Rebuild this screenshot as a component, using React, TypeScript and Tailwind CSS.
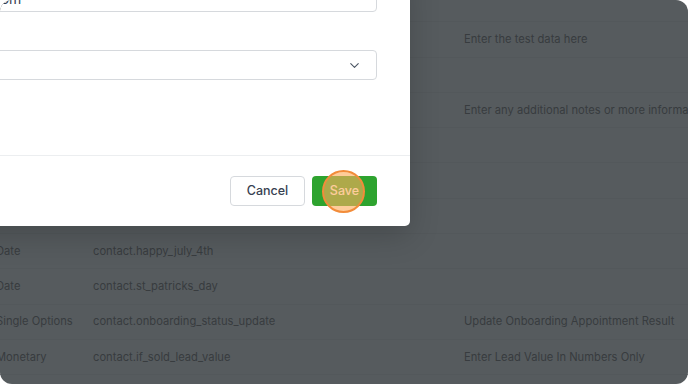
import { ChevronDown } from "lucide-react";

const rows = [
  { type: "", key: "", hint: "" },
  { type: "Text", key: "contact.test_data", hint: "Enter the test data here" },
  { type: "", key: "", hint: "" },
  { type: "Large Text", key: "contact.additional_notes", hint: "Enter any additional notes or more information" },
  { type: "", key: "", hint: "" },
  { type: "", key: "", hint: "" },
  { type: "", key: "", hint: "" },
  { type: "Date", key: "contact.happy_july_4th", hint: "" },
  { type: "Date", key: "contact.st_patricks_day", hint: "" },
  { type: "Single Options", key: "contact.onboarding_status_update", hint: "Update Onboarding Appointment Result" },
  { type: "Monetary", key: "contact.if_sold_lead_value", hint: "Enter Lead Value In Numbers Only" },
  { type: "", key: "", hint: "" },
];

export default function App() {
  return (
    <div
      className="h-[384px] w-[688px] overflow-hidden bg-white"
      style={{ fontFamily: "Inter, 'Noto Sans', sans-serif" }}
    >
      <div className="relative h-full w-full overflow-hidden rounded-[12px] bg-[#565b5e]">
        {/* Dimmed table behind the modal */}
        <div className="-mt-[13px] flex flex-col">
          {rows.map((r, i) => (
            <div
              key={i}
              className="flex h-[35.3px] shrink-0 items-center border-b border-[#53585b] text-[11.2px] text-[#383c3f]"
            >
              <div className="-ml-[4px] w-[97px] shrink-0 whitespace-nowrap">{r.type}</div>
              <div className="w-[371px] shrink-0 whitespace-nowrap">{r.key}</div>
              <div className="whitespace-nowrap">{r.hint}</div>
            </div>
          ))}
        </div>

        {/* Modal */}
        <div className="absolute -left-[160px] -top-[30px] flex h-[256px] w-[570px] flex-col rounded-b-[5px] bg-white shadow-[0_10px_30px_rgba(0,0,0,0.18)]">
          <div className="flex flex-col px-[33px] pt-[12px]">
            <div className="flex h-[30px] items-center rounded-[4px] border border-[#d6d9dd] px-3 text-[14px] text-[#374151]">
              <span className="-mb-[2px]">testuser@gmail.com</span>
            </div>
            <div className="mt-[38px] flex h-[30px] items-center justify-end rounded-[4px] border border-[#d6d9dd] px-[14px]">
              <ChevronDown className="h-[15px] w-[15px] text-[#4b5563]" strokeWidth={1.75} />
            </div>
          </div>
          <div className="mt-auto flex h-[71px] items-center justify-end gap-[7px] border-t border-[#eceef0] px-[33px]">
            <button className="h-[30px] w-[75px] rounded-[4px] border border-[#d6d9dd] bg-white text-[12.5px] font-medium text-[#374151]">
              Cancel
            </button>
            <div className="relative">
              <button className="h-[30px] w-[65px] rounded-[4px] bg-[#2ea32f] text-[12.5px] font-medium text-white">
                Save
              </button>
              <div className="absolute left-[10px] top-[-6.5px] h-[43px] w-[43px] rounded-full border-2 border-[#f28c3a] bg-[rgba(253,172,92,0.62)]" />
            </div>
          </div>
        </div>
      </div>
    </div>
  );
}
